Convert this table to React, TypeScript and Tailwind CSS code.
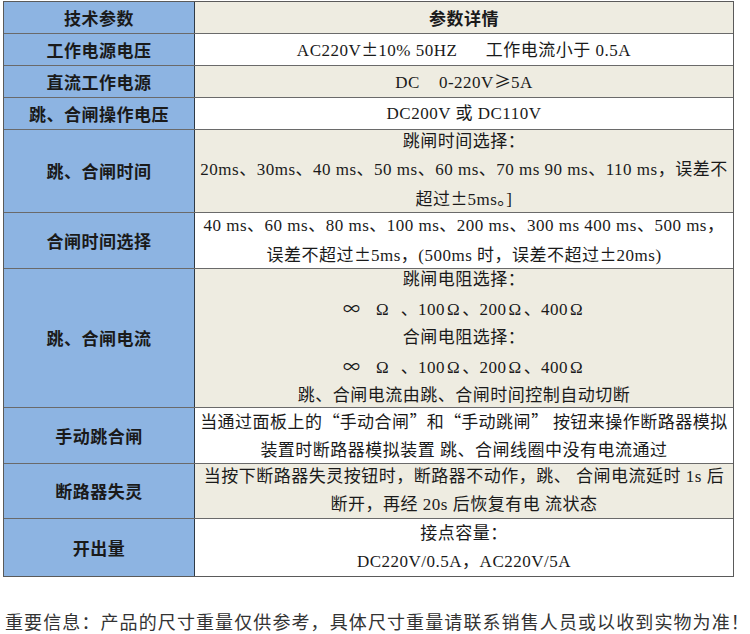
import React from 'react';

type Row = {
  label: string;
  h: string;
  bg: string;
  lines: string[];
  bold?: boolean;
};

const rows: Row[] = [
  { label: '技术参数', h: 'h-[32px]', bg: 'bg-[#eeece1]', lines: ['参数详情'], bold: true },
  { label: '工作电源电压', h: 'h-[32px]', bg: 'bg-white', lines: ['AC220V±10% 50HZ\u00a0\u00a0\u00a0\u00a0\u00a0\u00a0工作电流小于 0.5A'] },
  { label: '直流工作电源', h: 'h-[32px]', bg: 'bg-[#eeece1]', lines: ['DC\u00a0\u00a0\u00a0\u00a00-220V≥5A'] },
  { label: '跳、合闸操作电压', h: 'h-[32px]', bg: 'bg-white', lines: ['DC200V 或 DC110V'] },
  {
    label: '跳、合闸时间',
    h: 'h-[83px]',
    bg: 'bg-[#eeece1]',
    lines: ['跳闸时间选择：', '20ms、30ms、40 ms、50 ms、60 ms、70 ms 90 ms、110 ms，误差不', '超过±5ms。]'],
  },
  {
    label: '合闸时间选择',
    h: 'h-[56px]',
    bg: 'bg-white',
    lines: ['40 ms、60 ms、80 ms、100 ms、200 ms、300 ms 400 ms、500 ms，', '误差不超过±5ms，(500ms 时，误差不超过±20ms)'],
  },
  {
    label: '跳、合闸电流',
    h: 'h-[139px]',
    bg: 'bg-[#eeece1]',
    lines: [
      '跳闸电阻选择：',
      '∞\u00a0\u00a0\u00a0Ω\u00a0\u00a0、100Ω、200Ω、400Ω',
      '合闸电阻选择：',
      '∞\u00a0\u00a0\u00a0Ω\u00a0\u00a0、100Ω、200Ω、400Ω',
      '跳、合闸电流由跳、合闸时间控制自动切断',
    ],
  },
  {
    label: '手动跳合闸',
    h: 'h-[56px]',
    bg: 'bg-white',
    lines: ['当通过面板上的“手动合闸”和“手动跳闸” 按钮来操作断路器模拟', '装置时断路器模拟装置 跳、合闸线圈中没有电流通过'],
  },
  {
    label: '断路器失灵',
    h: 'h-[55px]',
    bg: 'bg-[#eeece1]',
    lines: ['当按下断路器失灵按钮时，断路器不动作，跳、 合闸电流延时 1s 后', '断开，再经 20s 后恢复有电 流状态'],
  },
  {
    label: '开出量',
    h: 'h-[57px]',
    bg: 'bg-white',
    lines: ['接点容量：', 'DC220V/0.5A，AC220V/5A'],
  },
];

function Rich({ text }: { text: string }) {
  const parts: React.ReactNode[] = [];
  let buf = '';
  const flush = (k: string) => {
    if (buf) {
      parts.push(<span key={k}>{buf}</span>);
      buf = '';
    }
  };
  Array.from(text).forEach((ch, idx) => {
    if (ch === '“') {
      flush('b' + idx);
      parts.push(
        <span key={idx} className="inline-block w-[1em] text-right font-['Noto_Sans_CJK_SC',sans-serif]">
          “
        </span>
      );
    } else if (ch === '”') {
      flush('b' + idx);
      parts.push(
        <span key={idx} className="inline-block w-[1em] text-left font-['Noto_Sans_CJK_SC',sans-serif]">
          ”
        </span>
      );
    } else if (ch === '±' || ch === '≥' || ch === '∞') {
      flush('b' + idx);
      parts.push(
        <span key={idx} className="inline-block w-[1em] text-center font-['Noto_Sans_CJK_SC',sans-serif]">
          {ch}
        </span>
      );
    } else if (ch === 'Ω') {
      flush('b' + idx);
      parts.push(
        <span key={idx} className="inline-block w-[1em] text-center">
          {ch}
        </span>
      );
    } else {
      buf += ch;
    }
  });
  flush('end');
  return <>{parts}</>;
}

export default function App() {
  return (
    <div className="w-[750px] h-[634px] bg-white overflow-hidden">
      <div className="ml-[3px] mt-[1px] w-[731px] border border-[#5a5a5a]">
        {rows.map((r, i) => (
          <div
            key={i}
            className={`flex ${r.h} ${i < rows.length - 1 ? 'border-b border-[#6a6a6a]' : ''}`}
          >
            <div className="w-[191px] shrink-0 bg-[#8db4e2] border-r border-[#2f3a45] flex items-center justify-center font-['Noto_Sans_CJK_SC',sans-serif] font-bold text-[17px] tracking-[0.5px] text-[#1a1a1a]">
              {r.label}
            </div>
            <div
              className={`flex-1 ${r.bg} flex flex-col items-center justify-center text-[#1a1a1a] font-['Liberation_Serif','Noto_Sans_CJK_SC',serif] text-[17px] tracking-[0.5px] leading-[28px] ${r.bold ? "font-bold font-['Noto_Sans_CJK_SC',sans-serif]" : ''}`}
            >
              {r.lines.map((l, j) => (
                <div key={j} className="whitespace-nowrap">
                  <Rich text={l} />
                </div>
              ))}
            </div>
          </div>
        ))}
      </div>
      <div className="mt-[33px] ml-[5px] whitespace-nowrap font-['Liberation_Serif','Noto_Sans_CJK_SC',serif] text-[18px] tracking-[1.1px] leading-[26px] text-[#333]">
        重要信息：产品的尺寸重量仅供参考，具体尺寸重量请联系销售人员或以收到实物为准！
      </div>
    </div>
  );
}
